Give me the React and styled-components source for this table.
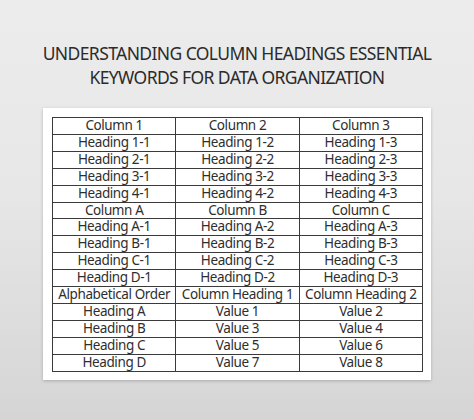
import React from "react";
import styled, { createGlobalStyle } from "styled-components";

const rows = [
  ["Column 1", "Column 2", "Column 3"],
  ["Heading 1-1", "Heading 1-2", "Heading 1-3"],
  ["Heading 2-1", "Heading 2-2", "Heading 2-3"],
  ["Heading 3-1", "Heading 3-2", "Heading 3-3"],
  ["Heading 4-1", "Heading 4-2", "Heading 4-3"],
  ["Column A", "Column B", "Column C"],
  ["Heading A-1", "Heading A-2", "Heading A-3"],
  ["Heading B-1", "Heading B-2", "Heading B-3"],
  ["Heading C-1", "Heading C-2", "Heading C-3"],
  ["Heading D-1", "Heading D-2", "Heading D-3"],
  ["Alphabetical Order", "Column Heading 1", "Column Heading 2"],
  ["Heading A", "Value 1", "Value 2"],
  ["Heading B", "Value 3", "Value 4"],
  ["Heading C", "Value 5", "Value 6"],
  ["Heading D", "Value 7", "Value 8"],
];

function App() {
  return (
    <>
      <GlobalStyle />
      <Page>
        <Title>
          UNDERSTANDING COLUMN HEADINGS ESSENTIAL
          <br />
          KEYWORDS FOR DATA ORGANIZATION
        </Title>
        <Sheet>
          <Table>
            <tbody>
              {rows.map((row, i) => (
                <tr key={i}>
                  {row.map((cell, j) => (
                    <Cell key={j}>{cell}</Cell>
                  ))}
                </tr>
              ))}
            </tbody>
          </Table>
        </Sheet>
      </Page>
    </>
  );
}

export default App;

const GlobalStyle = createGlobalStyle`
  html, body {
    margin: 0;
    padding: 0;
  }
  body {
    font-family: "Noto Sans", "Open Sans", sans-serif;
  }
`;

const Page = styled.div`
  width: 474px;
  height: 419px;
  box-sizing: border-box;
  padding-top: 42px;
  background: linear-gradient(180deg, #ececec 0%, #e7e7e7 45%, #d5d5d5 100%);
  display: flex;
  flex-direction: column;
  align-items: center;
  overflow: hidden;
`;

const Title = styled.h1`
  margin: 0;
  font-size: 17.5px;
  font-weight: 400;
  line-height: 23.5px;
  letter-spacing: -0.6px;
  color: #2b2b2b;
  text-align: center;
`;

const Sheet = styled.div`
  margin-top: 19px;
  width: 388px;
  box-sizing: border-box;
  padding: 9px 8px 8px 9px;
  background: #ffffff;
  box-shadow: 0 1px 3px rgba(0, 0, 0, 0.22);
`;

const Table = styled.table`
  width: 100%;
  border-collapse: collapse;
  table-layout: fixed;
  border: 1px solid #3a3a3a;
`;

const Cell = styled.td`
  height: 15.9px;
  padding: 0;
  border: 1px solid #3a3a3a;
  text-align: center;
  font-size: 13.5px;
  line-height: 15.9px;
  letter-spacing: -0.4px;
  color: #2e2e2e;
  white-space: nowrap;
`;
